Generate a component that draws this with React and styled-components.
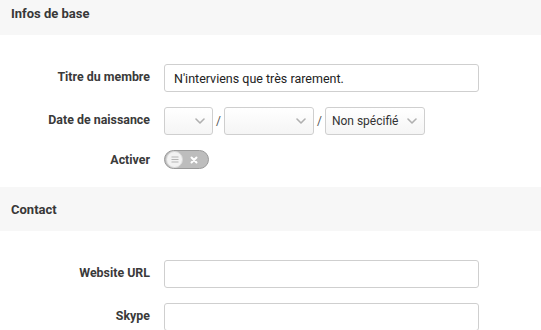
import React from 'react';
import styled, { createGlobalStyle } from 'styled-components';

const GlobalStyle = createGlobalStyle`
  html, body {
    margin: 0;
    padding: 0;
    background: #ffffff;
  }
  body {
    font-family: Roboto, "Liberation Sans", sans-serif;
    color: #333;
  }
`;

const Page = styled.div`
  width: 541px;
  height: 330px;
  overflow: hidden;
`;

const SectionHeader = styled.div`
  display: flex;
  align-items: center;
  height: 44px;
  margin-top: ${props => props.$first ? '-9px' : '0'};
  padding: 0 11px;
  background: #f7f7f7;
  font-size: 13px;
  font-weight: 700;
  color: #383838;
`;

const SectionBody = styled.div`
  display: flex;
  flex-direction: column;
  gap: 15px;
  padding: 29px 0 18px;
`;

const Row = styled.div`
  display: grid;
  grid-template-columns: 150px 1fr;
  column-gap: 14px;
  align-items: center;
`;

const Label = styled.label`
  text-align: right;
  font-size: 12.4px;
  font-weight: 700;
  color: #3a3a3a;
  padding-bottom: ${props => props.$tall ? '3px' : '0'};
`;

const TextInput = styled.div`
  box-sizing: border-box;
  width: 315px;
  height: 28px;
  padding: 0 9px;
  display: flex;
  align-items: center;
  border: 1px solid #cfcfcf;
  border-radius: 3px;
  background: #fff;
  font-size: 12.5px;
  color: #222;
`;

const DateGroup = styled.div`
  display: flex;
  align-items: center;
  gap: 3px;
`;

const Select = styled.div`
  box-sizing: border-box;
  width: ${props => props.$width}px;
  height: 28px;
  padding: 0 7px 0 6px;
  display: flex;
  align-items: center;
  justify-content: space-between;
  border: 1px solid #cfcfcf;
  border-radius: 3px;
  background: linear-gradient(#ffffff, #f5f5f5);
  font-size: 12px;
  color: #333;
`;

const Slash = styled.span`
  font-size: 12px;
  color: #555;
`;

const Toggle = styled.div`
  box-sizing: border-box;
  width: 45px;
  height: 19px;
  border: 1px solid #9a9a9a;
  border-radius: 10px;
  background: #bdbdbd;
  display: flex;
  align-items: center;
  padding: 0 1px;
  gap: 7px;
`;

const Knob = styled.div`
  box-sizing: border-box;
  width: 17px;
  height: 17px;
  border-radius: 50%;
  background: #f2f2f2;
  border: 1px solid #d8d8d8;
  display: flex;
  align-items: center;
  justify-content: center;
`;

const Chevron = () => (
  <svg width="10" height="6" viewBox="0 0 10 6" fill="none">
    <path d="M1 1l4 4 4-4" stroke="#b0b0b0" strokeWidth="1.6" strokeLinecap="round" strokeLinejoin="round" />
  </svg>
);

const Lines = () => (
  <svg width="8" height="7" viewBox="0 0 8 7">
    <path d="M0.5 1h7M0.5 3.5h7M0.5 6h7" stroke="#b5b5b5" strokeWidth="1" />
  </svg>
);

const Cross = () => (
  <svg width="8" height="8" viewBox="0 0 8 8">
    <path d="M1.5 1.5l5 5M6.5 1.5l-5 5" stroke="#fff" strokeWidth="2" strokeLinecap="round" />
  </svg>
);

const App = () => (
  <Page>
    <GlobalStyle />
    <SectionHeader $first>Infos de base</SectionHeader>
    <SectionBody>
      <Row>
        <Label $tall>Titre du membre</Label>
        <TextInput>N'interviens que très rarement.</TextInput>
      </Row>
      <Row>
        <Label $tall>Date de naissance</Label>
        <DateGroup>
          <Select $width={49}><span /><Chevron /></Select>
          <Slash>/</Slash>
          <Select $width={90}><span /><Chevron /></Select>
          <Slash>/</Slash>
          <Select $width={100}><span>Non spécifié</span><Chevron /></Select>
        </DateGroup>
      </Row>
      <Row>
        <Label>Activer</Label>
        <Toggle>
          <Knob><Lines /></Knob>
          <Cross />
        </Toggle>
      </Row>
    </SectionBody>
    <SectionHeader>Contact</SectionHeader>
    <SectionBody>
      <Row>
        <Label $tall>Website URL</Label>
        <TextInput />
      </Row>
      <Row>
        <Label $tall>Skype</Label>
        <TextInput />
      </Row>
    </SectionBody>
  </Page>
);

export default App;
